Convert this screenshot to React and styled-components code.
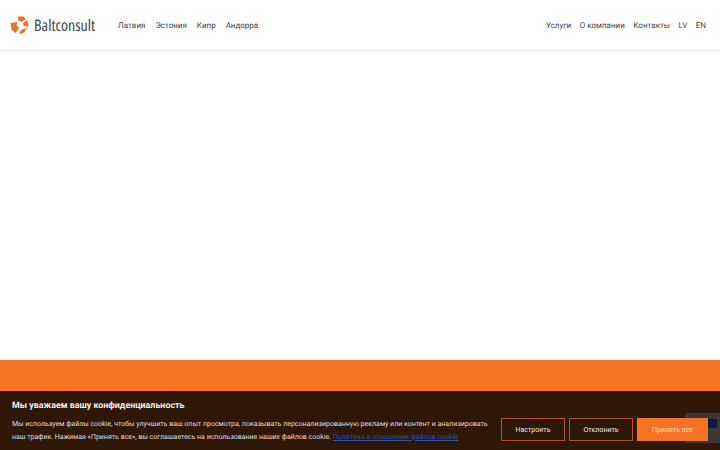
import styled, { createGlobalStyle } from "styled-components";

const GlobalStyle = createGlobalStyle`
  html, body {
    margin: 0;
    height: 100%;
    background: #fff;
    font-family: Roboto, "Liberation Sans", sans-serif;
    text-rendering: geometricPrecision;
  }
  #root {
    height: 100%;
  }
`;

const Page = styled.div`
  position: relative;
  height: 450px;
  overflow: hidden;
  display: flex;
  flex-direction: column;
`;

const Header = styled.header`
  height: 51px;
  box-sizing: border-box;
  flex: none;
  display: flex;
  align-items: center;
  justify-content: space-between;
  padding: 0 14px 0 10px;
  border-bottom: 1px solid #f0f0f0;
`;

const Side = styled.div`
  display: flex;
  align-items: center;
`;

const Logo = styled.a`
  display: flex;
  align-items: center;
  gap: 5px;
  width: 108px;
  font-family: "Open Sans", sans-serif;
  font-size: 16px;
  font-stretch: 75%;
  color: #444;
`;

const Nav = styled.nav`
  display: flex;
  gap: ${(p) => p.$gap}px;
`;

const NavLink = styled.a`
  font-size: 8px;
  color: #444;
`;

const Main = styled.main`
  flex: 1;
`;

const Footer = styled.footer`
  height: 90px;
  flex: none;
  background: #f67323;
`;

const Banner = styled.div`
  position: absolute;
  left: 0;
  right: 0;
  bottom: 0;
  height: 59px;
  box-sizing: border-box;
  padding: 9px 12px 0;
  background: #2f1708;
  display: flex;
  align-items: flex-end;
  justify-content: space-between;
`;

const Copy = styled.div`
  width: 480px;
  align-self: flex-start;
`;

const Title = styled.div`
  font-size: 8.9px;
  font-weight: 700;
  line-height: 12px;
  color: #f4f0ec;
  margin-bottom: 6px;
`;

const Text = styled.p`
  margin: 0;
  font-size: 7px;
  line-height: 12.5px;
  color: #e4dcd5;
`;

const Policy = styled.a`
  color: #2b55a8;
  text-decoration: underline;
`;

const Actions = styled.div`
  position: relative;
  z-index: 1;
  display: flex;
  gap: 4px;
  margin-bottom: 9px;
`;

const Button = styled.button`
  width: ${(p) => p.$width}px;
  height: 23px;
  padding: 0;
  box-sizing: border-box;
  font-family: inherit;
  font-size: 7px;
  color: ${(p) => (p.$primary ? "#ffe0cc" : "#f0e8e2")};
  background: ${(p) => (p.$primary ? "#f67323" : "transparent")};
  border: 1px solid ${(p) => (p.$primary ? "#f67323" : "#b3552a")};
`;

const ChatWidget = styled.div`
  position: absolute;
  right: 0;
  bottom: 7px;
  width: 35px;
  height: 30px;
  background: #3a3937;

  &::after {
    content: "";
    position: absolute;
    left: 23px;
    top: 6px;
    width: 9px;
    height: 9px;
    background: #101a3c;
  }
`;

function LogoMark() {
  return (
    <svg width="19" height="18" viewBox="0 0 19 18">
      <g fill="#f0702a">
        <path d="M8 0.5 L13 0.5 L16 3 L11 6 L8 4 Z" />
        <path d="M13 7 L17 4 L18.5 8.5 L18 11 L13.5 9.5 Z" />
        <path d="M0.5 7 L7 6 L6.5 9 L9 12 L5.5 17 L1.5 13.5 Z" />
        <path d="M9 17.5 L11.5 13.5 L15 13 L17.5 12 L14 16.5 L11 17.8 Z" />
      </g>
    </svg>
  );
}

export default function App() {
  return (
    <>
      <GlobalStyle />
      <Page>
        <Header>
          <Side>
            <Logo>
              <LogoMark />
              Baltconsult
            </Logo>
            <Nav $gap={10}>
              <NavLink>Латвия</NavLink>
              <NavLink>Эстония</NavLink>
              <NavLink>Кипр</NavLink>
              <NavLink>Андорра</NavLink>
            </Nav>
          </Side>
          <Nav $gap={8.5}>
            <NavLink>Услуги</NavLink>
            <NavLink>О компании</NavLink>
            <NavLink>Контакты</NavLink>
            <NavLink>LV</NavLink>
            <NavLink>EN</NavLink>
          </Nav>
        </Header>
        <Main />
        <Footer />
        <Banner>
          <Copy>
            <Title>Мы уважаем вашу конфиденциальность</Title>
            <Text>
              Мы используем файлы cookie, чтобы улучшить ваш опыт просмотра, показывать персонализированную рекламу или контент и анализировать наш трафик. Нажимая «Принять все», вы соглашаетесь на использование наших файлов cookie.{" "}
              <Policy>Политика в отношении файлов cookie</Policy>
            </Text>
          </Copy>
          <ChatWidget />
          <Actions>
            <Button $width={64}>Настроить</Button>
            <Button $width={64}>Отклонить</Button>
            <Button $width={71} $primary>Принять все</Button>
          </Actions>
        </Banner>
      </Page>
    </>
  );
}
